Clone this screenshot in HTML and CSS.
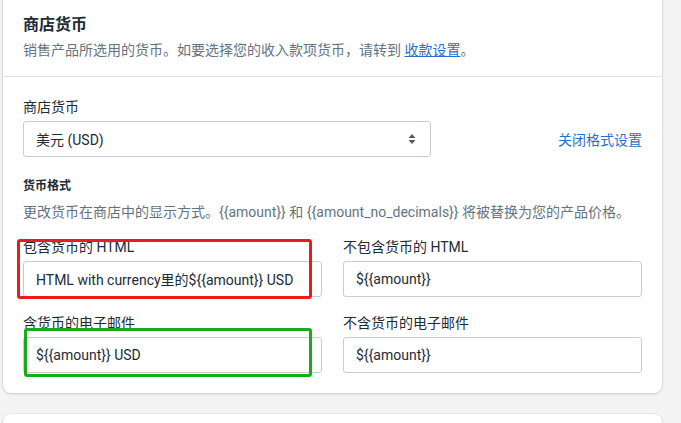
FILE: index.html
```html
<!DOCTYPE html>
<html lang="zh-CN">
<head>
  <meta charset="UTF-8">
  <meta name="viewport" content="width=device-width, initial-scale=1.0">
  <title>商店货币</title>
  <link rel="stylesheet" href="styles.css">
</head>
<body>
  <div id="page">
    <div class="card">
      <div class="section head">
        <h2 class="title">商店货币</h2>
        <p class="desc">销售产品所选用的货币。如要选择您的收入款项货币，请转到 <a href="#" class="link-under">收款设置</a>。</p>
      </div>
      <div class="section body">
        <div class="label">商店货币</div>
        <div class="select-row">
          <div class="select">
            <span>美元 (USD)</span>
            <svg class="arrows" width="8" height="12" viewBox="0 0 8 12">
              <path d="M4 1 L7.5 5 L0.5 5 Z" fill="#555b62"/>
              <path d="M4 11 L7.5 7 L0.5 7 Z" fill="#555b62"/>
            </svg>
          </div>
          <a href="#" class="link">关闭格式设置</a>
        </div>
        <h3 class="sub">货币格式</h3>
        <p class="desc">更改货币在商店中的显示方式。{{amount}} 和 {{amount_no_decimals}} 将被替换为您的产品价格。</p>
        <div class="grid">
          <div class="field">
            <div class="label">包含货币的 HTML</div>
            <div class="input">HTML with currency里的${{amount}} USD</div>
          </div>
          <div class="field">
            <div class="label">不包含货币的 HTML</div>
            <div class="input">${{amount}}</div>
          </div>
          <div class="field">
            <div class="label">含货币的电子邮件</div>
            <div class="input">${{amount}} USD</div>
          </div>
          <div class="field">
            <div class="label">不含货币的电子邮件</div>
            <div class="input">${{amount}}</div>
          </div>
        </div>
      </div>
    </div>
    <div class="card next"></div>
    <div class="mark red"></div>
    <div class="mark green"></div>
  </div>
</body>
</html>
```

FILE: styles.css
```css
* {
  margin: 0;
  padding: 0;
  box-sizing: border-box;
}
body {
  background: #f4f4f4;
  font-family: Roboto, "Noto Sans CJK SC", sans-serif;
  color: #212b36;
  overflow: hidden;
}
#page {
  display: flow-root;
  position: relative;
  width: 681px;
  height: 423px;
  overflow: hidden;
  padding: 0 19px 0 3px;
}
.card {
  background: #fff;
  border-radius: 8px;
  box-shadow: 0 0 0 1px rgba(63, 63, 68, 0.05), 0 1px 3px rgba(63, 63, 68, 0.18);
  margin-top: -8px;
}
.card.next {
  margin-top: 21px;
  height: 10px;
  border-radius: 8px 8px 0 0;
}
.section {
  padding: 0 20px;
}
.head {
  padding-top: 21px;
  padding-bottom: 16px;
  border-bottom: 1px solid #e1e3e5;
}
.title {
  font-size: 16px;
  line-height: 24px;
  font-weight: 700;
}
.desc {
  font-size: 14px;
  line-height: 20px;
  color: #637381;
  margin-top: 3px;
}
.link-under {
  color: #2c6ecb;
  text-decoration: underline;
}
.link {
  color: #2c6ecb;
  text-decoration: none;
  font-size: 14px;
}
.body {
  padding-top: 20px;
  padding-bottom: 20px;
}
.label {
  font-size: 14px;
  line-height: 20px;
  margin-bottom: 4px;
}
.select-row {
  display: flex;
  align-items: center;
  justify-content: space-between;
}
.select {
  width: 408px;
  height: 36px;
  border: 1px solid #c4cdd5;
  border-radius: 3px;
  display: flex;
  align-items: center;
  justify-content: space-between;
  padding: 0 14px 0 12px;
  font-size: 14px;
}
.sub {
  font-size: 12px;
  line-height: 16px;
  font-weight: 700;
  margin-top: 21px;
}
.body .desc {
  margin-top: 8px;
}
.grid {
  display: grid;
  grid-template-columns: 1fr 1fr;
  column-gap: 21px;
  row-gap: 16px;
  margin-top: 15px;
}
.input {
  height: 36px;
  border: 1px solid #c4cdd5;
  border-radius: 3px;
  display: flex;
  align-items: center;
  padding: 0 12px;
  font-size: 14px;
}
.mark {
  position: absolute;
  border: 3px solid;
  border-radius: 3px;
}
.red {
  border-color: #ec1c1c;
  left: 17px;
  top: 239px;
  width: 295px;
  height: 60px;
}
.green {
  border-color: #1aab1a;
  left: 24px;
  top: 328px;
  width: 288px;
  height: 49px;
}
```
